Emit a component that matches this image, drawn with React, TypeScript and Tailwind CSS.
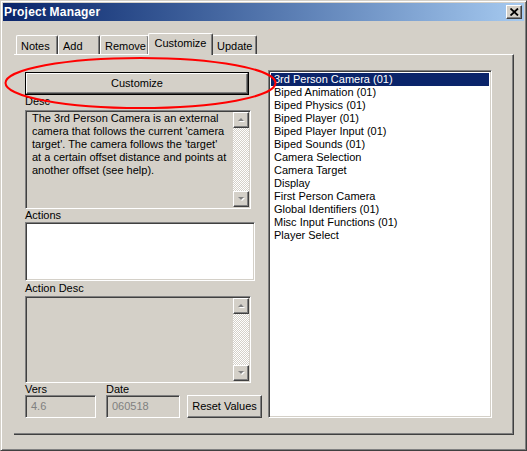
import React from 'react'

const sunken =
  'border border-t-[#808080] border-l-[#808080] border-r-white border-b-white shadow-[inset_1px_1px_0_#404040,inset_-1px_-1px_0_#d4d0c8]'
const raised =
  'border border-t-white border-l-white border-r-[#404040] border-b-[#404040] shadow-[inset_-1px_-1px_0_#808080,inset_1px_1px_0_#d4d0c8]'

const items = [
  '3rd Person Camera (01)',
  'Biped Animation (01)',
  'Biped Physics (01)',
  'Biped Player (01)',
  'Biped Player Input (01)',
  'Biped Sounds (01)',
  'Camera Selection',
  'Camera Target',
  'Display',
  'First Person Camera',
  'Global Identifiers (01)',
  'Misc Input Functions (01)',
  'Player Select',
]

const tabs = [
  { label: 'Notes', w: 'w-[42px]' },
  { label: 'Add', w: 'w-[42px]' },
  { label: 'Remove', w: 'w-[49px]' },
  { label: 'Customize', w: 'w-[65px]', active: true },
  { label: 'Update', w: 'w-[45px]' },
]

function Arrow({ up }: { up?: boolean }) {
  return (
    <div className={`w-[16px] h-[16px] bg-[#d4d0c8] ${raised} flex items-center justify-center`}>
      <svg width="9" height="6" viewBox="0 0 9 6">
        {up ? (
          <>
            <polygon points="2,5 5,2 8,5" fill="#fff" />
            <polygon points="1,4 4,1 7,4" fill="#808080" />
          </>
        ) : (
          <>
            <polygon points="2,2 8,2 5,5" fill="#fff" />
            <polygon points="1,1 7,1 4,4" fill="#808080" />
          </>
        )}
      </svg>
    </div>
  )
}

function Scrollbar() {
  return (
    <div className="w-[16px] h-full flex flex-col shrink-0">
      <Arrow up />
      <div className="flex-1 bg-[repeating-conic-gradient(#ffffff_0_25%,#d4d0c8_0_50%)] bg-[length:2px_2px]" />
      <Arrow />
    </div>
  )
}

export default function App() {
  return (
    <div className="relative w-[527px] h-[451px] bg-[#d4d0c8] font-['Liberation_Sans',Arial,sans-serif] text-[11px] text-black border border-t-[#d4d0c8] border-l-[#d4d0c8] border-r-[#404040] border-b-[#404040] shadow-[inset_1px_1px_0_#fff,inset_-1px_-1px_0_#808080] p-[2px] overflow-hidden">
      {/* title bar */}
      <div className="h-[18px] flex items-center justify-between pl-[1px] pr-[2px] bg-gradient-to-r from-[#0a246a] to-[#a6caf0]">
        <span className="text-white font-bold text-[12px] leading-none tracking-[0.2px]">Project Manager</span>
        <div className={`w-[16px] h-[14px] bg-[#d4d0c8] ${raised} flex items-center justify-center`}>
          <svg width="9" height="8" viewBox="0 0 9 8">
            <path d="M0.5 0.5 L8 7.5 M8 0.5 L0.5 7.5" stroke="#000" strokeWidth="1.8" />
          </svg>
        </div>
      </div>

      <div className="ml-[11px] mt-[12px] w-[500px]">
        {/* tabs */}
        <div className="flex items-end h-[21px] pl-[2px]">
          {tabs.map((t) =>
            t.active ? (
              <div
                key={t.label}
                className={`relative z-10 -mx-[1px] ${t.w} h-[22px] -mb-[1px] bg-[#d4d0c8] border border-b-0 border-t-white border-l-white border-r-[#404040] rounded-t-[2px] shadow-[inset_-1px_0_0_#808080] flex items-start justify-center pt-[3px] leading-[13px]`}
              >
                {t.label}
              </div>
            ) : (
              <div
                key={t.label}
                className={`${t.w} h-[19px] border border-b-0 border-t-white border-l-white border-r-[#404040] rounded-t-[2px] shadow-[inset_-1px_0_0_#808080] flex items-start pl-[4px] pt-[4px] leading-[13px]`}
              >
                {t.label}
              </div>
            ),
          )}
        </div>

        {/* panel */}
        <div className="h-[381px] border-t border-t-white border-r border-r-[#404040] border-b border-b-[#404040] shadow-[inset_-1px_-1px_0_#808080] flex items-start pl-[11px] pt-[15px]">
          <div className="w-[237px] mt-[2px] flex flex-col">
            <div className="w-[224px] h-[23px] border border-black">
              <div className={`h-full ${raised} flex items-center justify-center`}>Customize</div>
            </div>

            <div className="h-[15px] leading-[13px]">Desc</div>
            <div className={`w-[226px] h-[99px] ${sunken} flex p-[1px]`}>
              <div className="flex-1 min-w-0 overflow-hidden pl-[5px] leading-[13px] whitespace-nowrap">
                The 3rd Person Camera is an external
                <br />
                camera that follows the current 'camera
                <br />
                target'. The camera follows the 'target'
                <br />
                at a certain offset distance and points at
                <br />
                another offset (see help).
              </div>
              <Scrollbar />
            </div>

            <div className="h-[13px] leading-[13px]">Actions</div>
            <div className={`w-[230px] h-[59px] bg-white ${sunken}`} />

            <div className="h-[15px] leading-[15px]">Action Desc</div>
            <div className={`w-[226px] h-[87px] ${sunken} flex p-[1px]`}>
              <div className="flex-1" />
              <Scrollbar />
            </div>

            <div className="flex items-end">
              <div className="flex flex-col">
                <div className="h-[12px] leading-[12px]">Vers</div>
                <div className={`w-[71px] h-[23px] ${sunken} flex items-center pl-[5px] text-[#808080]`}>4.6</div>
              </div>
              <div className="flex flex-col ml-[10px]">
                <div className="h-[12px] leading-[12px]">Date</div>
                <div className={`w-[74px] h-[23px] ${sunken} flex items-center pl-[5px] text-[#808080]`}>060518</div>
              </div>
              <div className={`ml-[7px] w-[75px] h-[23px] ${raised} flex items-center justify-center`}>
                Reset Values
              </div>
            </div>
          </div>

          <div className={`ml-[6px] w-[224px] h-[348px] bg-white ${sunken} p-[2px]`}>
            {items.map((it, i) => (
              <div
                key={it}
                className={`h-[13px] leading-[13px] pl-[3px] whitespace-nowrap ${
                  i === 0 ? 'bg-[#0a246a] text-white' : ''
                }`}
              >
                {it}
              </div>
            ))}
          </div>
        </div>
      </div>

      {/* red annotation ellipse */}
      <svg className="absolute left-0 top-0 pointer-events-none" width="527" height="451">
        <ellipse cx="139.5" cy="82" rx="135" ry="25" fill="none" stroke="#ff0000" strokeWidth="2" />
      </svg>
    </div>
  )
}
